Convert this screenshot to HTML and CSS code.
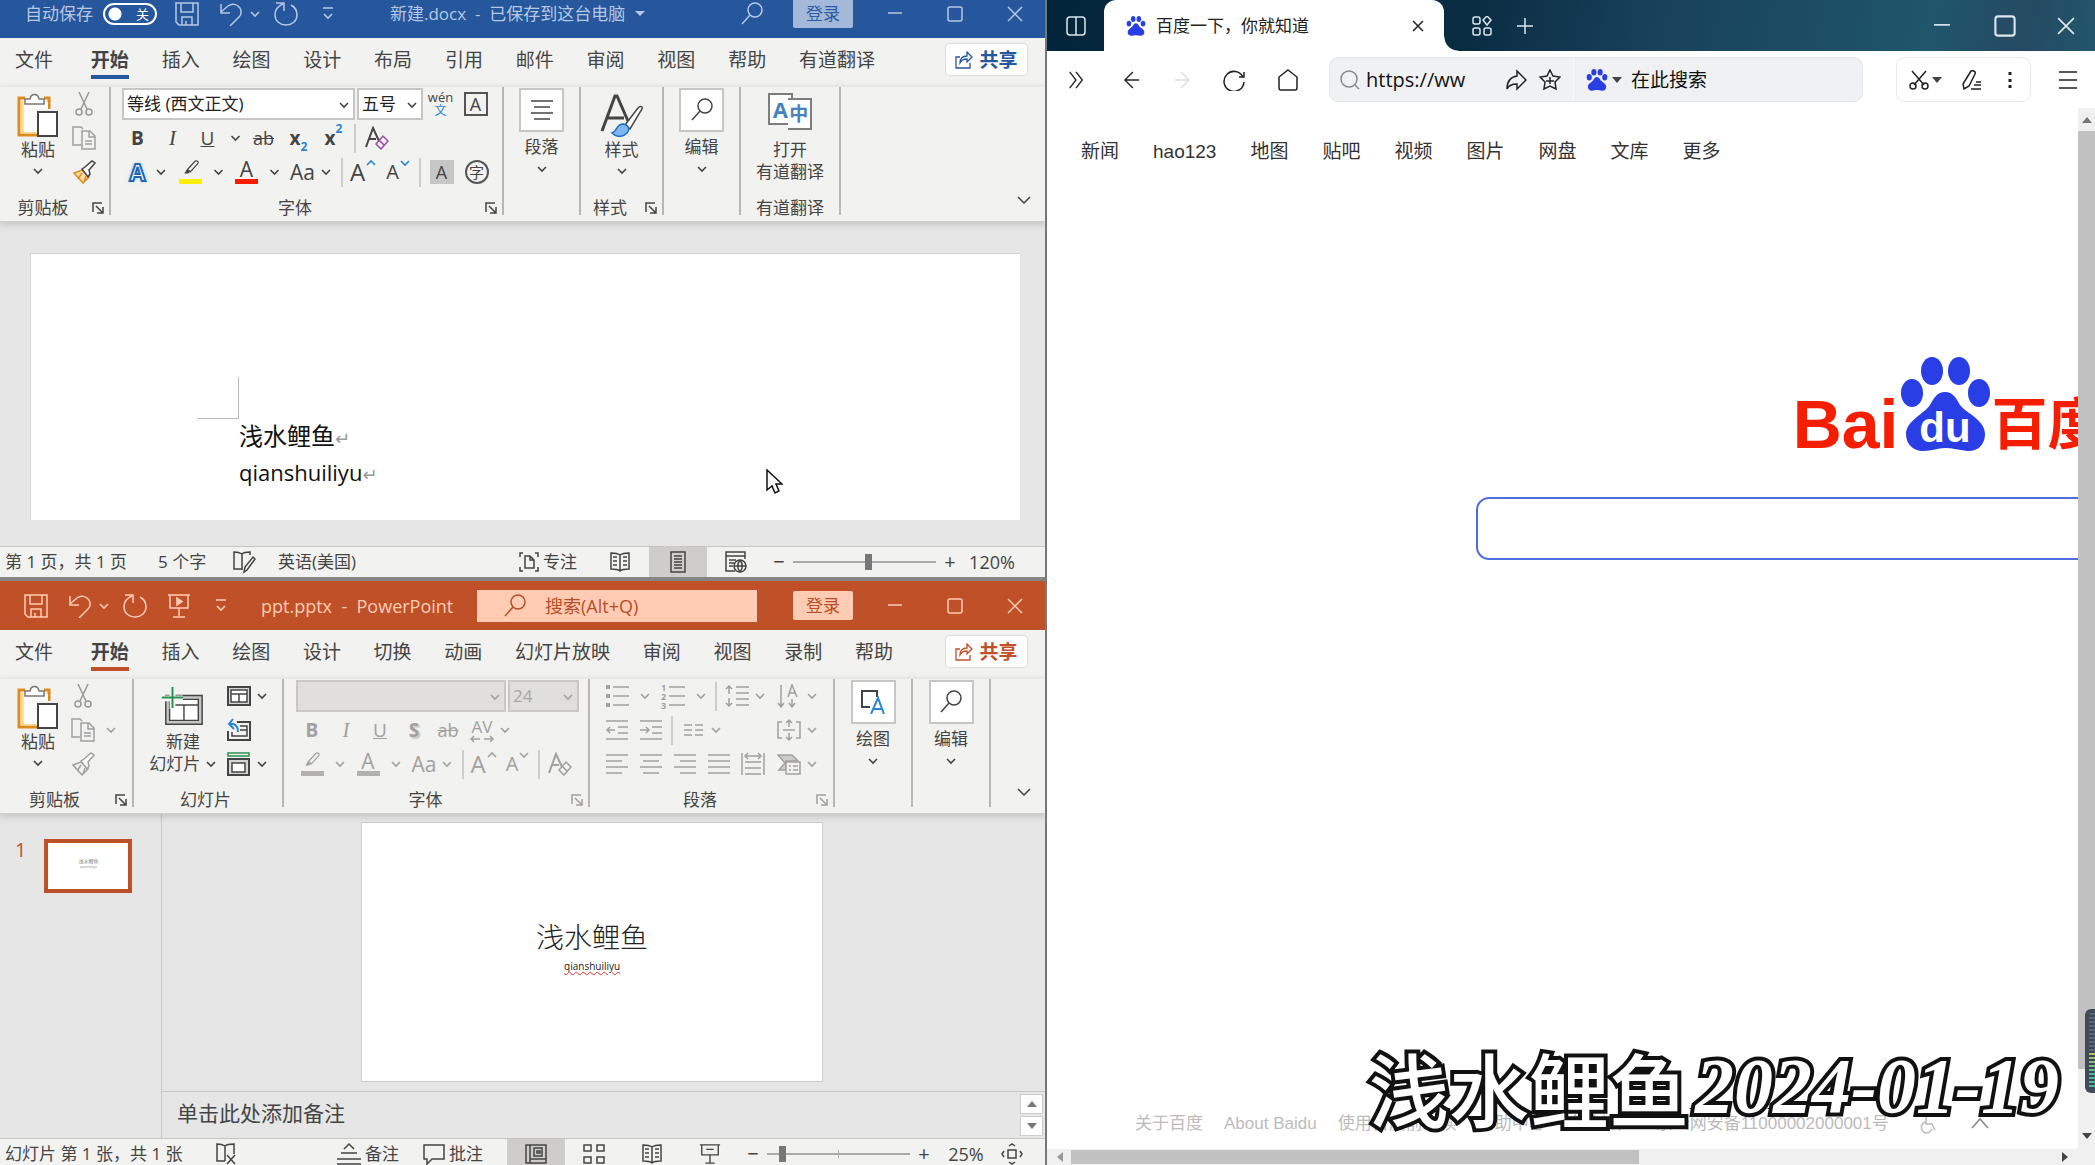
FILE: index.html
```html
<!DOCTYPE html>
<html lang="zh-CN">
<head>
    <meta charset="UTF-8">
    <meta name="viewport" content="width=device-width, initial-scale=1.0">
    <title>百度一下，你就知道</title>
    <link rel="stylesheet" href="styles.css">
</head>
<body>
    <!-- Shared icons -->
    <svg class="sprite" aria-hidden="true">
        <symbol id="chev" viewBox="0 0 12 12"><path d="M2 4l4 4 4-4" stroke-width="1.6"/></symbol>
        <symbol id="save" viewBox="0 0 24 24"><path d="M1 1h22v22H4l-3-3zM6 1v9h12V1M7 23v-8h10v8M11 19v4"/></symbol>
        <symbol id="undo" viewBox="0 0 24 24"><path d="M2 2v9h9M2 10l7-6c4-3 9-2 12 2 2 4 1 7-1 9l-9 9"/></symbol>
        <symbol id="redo" viewBox="0 0 24 24"><path d="M2 1h8v8M9 2C4 4 1 8 1 13c0 6 5 10 11 10s11-4 11-10c0-4-2-8-6-10"/></symbol>
        <symbol id="more" viewBox="0 0 12 16"><path d="M1 2h10M2 8l4 4 4-4" stroke-width="1.6"/></symbol>
        <symbol id="show" viewBox="0 0 24 24"><path d="M1 1h22M3 1v13h18V1M12 14v8M6 23h12"/><path d="M10 4l5 3.500-5 3.500z" fill="currentColor"/></symbol>
        <symbol id="lens" viewBox="0 0 24 24"><circle cx="15" cy="8" r="7"/><path d="M10 13L2 22"/></symbol>
        <symbol id="min" viewBox="0 0 16 16"><path d="M1 7h14"/></symbol>
        <symbol id="max" viewBox="0 0 16 16"><rect x="1" y="1" width="14" height="14" rx="2"/></symbol>
        <symbol id="close" viewBox="0 0 16 16"><path d="M1 1l14 14M15 1L1 15"/></symbol>
        <symbol id="share" viewBox="0 0 18 18"><path d="M5 6H1v11h14v-5M5 12c0-4 2-7 7-7V1l5 5-5 5V8c-4 0-5 1-7 4z" stroke-width="1.3"/></symbol>
        <symbol id="paste" viewBox="0 0 42 44"><path d="M8 5H2v37h18M27 5h5v11" stroke="#e08a1e" stroke-width="3"/><path d="M5 8v31h15" stroke="#ffd98a" stroke-width="3"/><path d="M7 9h24v7H20v23H7z" fill="#fbfbfa" stroke="none"/><path d="M8 11V6h5c1-6 8-6 9 0h5v5z" fill="#fff" stroke="#777"/><path d="M21 19h19v24H21z" fill="#fff" stroke="#444" stroke-width="2"/></symbol>
        <symbol id="cut" viewBox="0 0 24 24"><path d="M7 0l8 17M17 0L9 17" stroke="#999"/><circle cx="7" cy="20" r="3" stroke="#999"/><circle cx="17" cy="20" r="3" stroke="#999"/></symbol>
        <symbol id="copy" viewBox="0 0 24 24"><path d="M9 19H1V1h8l2 2M10 5h8l5 5v13H10zM17 5v6h6M13 15h7M13 18h7" stroke="#a0a0a0"/></symbol>
        <symbol id="brush" viewBox="0 0 24 24"><path class="bristle" d="M2 13l8-3 7 7-6 6zM6 19l4-6M12 22l2-6"/><path d="M10 9l3-2 7-6 3 2-6 7 1 4-2 3z" fill="#fff"/></symbol>
        <symbol id="launch" viewBox="0 0 12 12"><path d="M1 10V1h9M4 4l7 7M11 5v6H5"/></symbol>
        <symbol id="marker" viewBox="0 0 24 24"><path d="M7 13L17 2c2-2 6 0 4 3L11 16z"/><path d="M7 12l-4 6h5l4-3z" fill="currentColor" stroke="none"/></symbol>
        <symbol id="eraser" viewBox="0 0 24 24"><path d="M1 21L8 2l6 13M4 13h7" stroke-width="2"/><path class="rubber" d="M11 18l7-8 5 5-7 8zM14 14l5 5"/></symbol>
        <symbol id="lines" viewBox="0 0 24 24"><path d="M1 3h22M4 9h16M1 15h22M4 21h16"/></symbol>
        <symbol id="book" viewBox="0 0 22 22"><path d="M11 4v16M11 4C8 2 4 2 2 2v16c4 0 7 0 9 2 2-2 5-2 9-2V2c-2 0-6 0-9 2M4 6h4M4 10h4M4 14h4M14 6h4M14 10h4M14 14h4"/></symbol>
        <symbol id="paw" viewBox="0 0 89 95"><g fill="#2a3ee6" stroke="none"><ellipse cx="31" cy="14" rx="11" ry="14"/><ellipse cx="58" cy="14" rx="11" ry="14"/><ellipse cx="11" cy="36" rx="11" ry="14"/><ellipse cx="78" cy="36" rx="11" ry="14"/><path d="M44 35c8 0 11 6 15 13 6 8 25 15 25 29 0 11-8 18-18 17-8-1-14-3-22-3s-12 3-22 3C12 94 5 87 5 77c0-13 18-20 24-29 4-7 7-13 15-13z"/></g></symbol>
    </svg>

    <div class="desktop">
        <div class="office">
            <!-- Word -->
            <section class="window word">
                <header class="titlebar">
                    <label class="autosave">自动保存 <input type="checkbox" class="hidden-check"><span class="toggle">关</span></label>
                    <div class="quick">
                        <button aria-label="保存"><svg class="i24"><use href="#save"/></svg></button>
                        <button aria-label="撤消"><svg class="i24"><use href="#undo"/></svg><svg class="i12"><use href="#chev"/></svg></button>
                        <button aria-label="重做"><svg class="i24"><use href="#redo"/></svg></button>
                        <button aria-label="更多" class="more"><svg class="more-icon"><use href="#more"/></svg></button>
                    </div>
                    <div class="doc-name">新建.docx&nbsp; -&nbsp; 已保存到这台电脑 <i class="caret"></i></div>
                    <button class="find" aria-label="搜索"><svg class="i24"><use href="#lens"/></svg></button>
                    <button class="login">登录</button>
                    <div class="controls">
                        <button aria-label="最小化"><svg class="i16"><use href="#min"/></svg></button>
                        <button aria-label="最大化"><svg class="i16"><use href="#max"/></svg></button>
                        <button aria-label="关闭"><svg class="i16"><use href="#close"/></svg></button>
                    </div>
                </header>
                <div class="tabs">
                    <nav>
                        <a href="#" class="file">文件</a><a href="#" class="active">开始</a><a href="#">插入</a><a href="#">绘图</a><a href="#">设计</a><a href="#">布局</a><a href="#">引用</a><a href="#">邮件</a><a href="#">审阅</a><a href="#">视图</a><a href="#">帮助</a><a href="#">有道翻译</a>
                    </nav>
                    <button class="share"><svg class="i18"><use href="#share"/></svg>共享</button>
                </div>
                <div class="ribbon">
                    <div class="group g-clip">
                        <div class="tools">
                            <button class="big"><svg class="paste"><use href="#paste"/></svg>粘贴<svg class="i12"><use href="#chev"/></svg></button>
                            <div class="rows">
                                <div class="row"><button class="tb" aria-label="剪切"><svg class="i24"><use href="#cut"/></svg></button></div>
                                <div class="row"><button class="tb" aria-label="复制"><svg class="i24"><use href="#copy"/></svg></button></div>
                                <div class="row"><button class="tb orange" aria-label="格式刷"><svg class="i24"><use href="#brush"/></svg></button></div>
                            </div>
                        </div>
                        <div class="caption"><span>剪贴板</span><svg class="i12"><use href="#launch"/></svg></div>
                    </div>
                    <div class="group g-font">
                        <div class="rows">
                            <div class="row">
                                <span class="combo name"><select aria-label="字体"><option>等线 (西文正文)</option></select><svg class="i12"><use href="#chev"/></svg></span>
                                <span class="combo size"><select aria-label="字号"><option>五号</option></select><svg class="i12"><use href="#chev"/></svg></span>
                                <button class="tb pinyin"><span>wén</span><b>文</b></button>
                                <button class="tb"><span class="boxed">A</span></button>
                            </div>
                            <div class="row">
                                <button class="tb bold">B</button>
                                <button class="tb italic">I</button>
                                <button class="tb under">U</button><svg class="chev"><use href="#chev"/></svg>
                                <button class="tb strike">ab</button>
                                <button class="tb bold script">x<sub>2</sub></button>
                                <button class="tb bold script">x<sup>2</sup></button>
                                <i class="sep"></i>
                                <button class="tb" aria-label="清除格式"><svg class="i24"><use href="#eraser"/></svg></button>
                            </div>
                            <div class="row">
                                <button class="tb effect">A</button><svg class="chev tight"><use href="#chev"/></svg>
                                <button class="tb swatch yellow" aria-label="突出显示"><svg class="i18"><use href="#marker"/></svg></button><svg class="chev"><use href="#chev"/></svg>
                                <button class="tb swatch red">A</button><svg class="chev"><use href="#chev"/></svg>
                                <button class="tb case">Aa</button><svg class="chev tight"><use href="#chev"/></svg>
                                <i class="sep"></i>
                                <button class="tb grow">A<svg class="i12 up"><use href="#chev"/></svg></button>
                                <button class="tb shrink">A<svg class="i12"><use href="#chev"/></svg></button>
                                <i class="sep"></i>
                                <button class="tb"><span class="shade">A</span></button>
                                <button class="tb"><span class="ring">字</span></button>
                            </div>
                        </div>
                        <div class="caption"><span>字体</span><svg class="i12"><use href="#launch"/></svg></div>
                    </div>
                    <div class="group g-small">
                        <button class="big framed"><span class="frame"><svg class="i24"><use href="#lines"/></svg></span>段落<svg class="i12"><use href="#chev"/></svg></button>
                    </div>
                    <div class="group g-style">
                        <button class="big"><svg class="style-icon" viewBox="0 0 44 44"><path d="M2 38L15 3h2l11 25M7 25h17" stroke-width="3"/><path d="M25 32l13-17c2-2 5-2 4 1L30 36z" fill="#fff"/><path d="M12 40c5-1 4-9 11-9 6 1 7 5 4 9-5 5-11 4-15 0z" fill="#7fb8f0" stroke="#1c6fc0" stroke-width="1.5"/></svg>样式<svg class="i12"><use href="#chev"/></svg></button>
                        <div class="caption"><span>样式</span><svg class="i12"><use href="#launch"/></svg></div>
                    </div>
                    <div class="group g-small">
                        <button class="big framed"><span class="frame"><svg class="i24"><use href="#lens"/></svg></span>编辑<svg class="i12"><use href="#chev"/></svg></button>
                    </div>
                    <div class="group g-youdao">
                        <button class="big"><span class="translate"><b>A</b><b>中</b></span>打开<span>有道翻译</span></button>
                        <div class="caption"><span>有道翻译</span></div>
                    </div>
                    <button class="collapse" aria-label="折叠功能区"><svg class="i18" viewBox="0 0 12 12"><path d="M2 4l4 4 4-4" stroke-width="1"/></svg></button>
                </div>
                <main class="canvas">
                    <article class="paper">
                        <i class="margin-mark"></i>
                        <p class="cn">浅水鲤鱼<span>↵</span></p>
                        <p>qianshuiliyu<span>↵</span></p>
                    </article>
                </main>
                <footer class="status">
                    <span class="pages">第 1 页，共 1 页</span>
                    <span class="words">5 个字</span>
                    <svg class="i24" viewBox="0 0 24 24"><path d="M10 3v17M10 4C7 2 4 2 2 2v17h8M10 4c2-2 5-2 8-2v3M12 22l1-5 8-10 2 2-8 11z"/></svg>
                    <span>英语(美国)</span>
                    <div class="views">
                        <button class="focus"><svg class="i20" viewBox="0 0 20 20"><path d="M4 1H1v4M16 1h3v4M4 19H1v-4M16 19h3v-4M6 4h5l4 4v8H6zM11 4v4h4"/></svg>专注</button>
                        <button class="view" aria-label="阅读视图"><svg class="i22"><use href="#book"/></svg></button>
                        <button class="view on" aria-label="页面视图"><svg class="i22" viewBox="0 0 22 22"><path d="M4 1h14v20H4zM7 5h8M7 8h8M7 11h8M7 14h8M7 17h8"/></svg></button>
                        <button class="view" aria-label="Web 版式"><svg class="i22" viewBox="0 0 22 22"><path d="M10 20H1V1h19v7M1 5h19M4 9h7M4 12h5M4 15h4"/><circle cx="15" cy="15" r="6"/><path d="M9 15h12M15 9c-3 4-3 8 0 12M15 9c3 4 3 8 0 12"/></svg></button>
                        <button class="zoom">−</button>
                        <input type="range" aria-label="缩放" min="0" max="100" value="53">
                        <button class="zoom">+</button>
                        <span class="percent">120%</span>
                    </div>
                </footer>
            </section>

            <!-- PowerPoint -->
            <section class="window ppt">
                <header class="titlebar">
                    <div class="quick">
                        <button aria-label="保存"><svg class="i24"><use href="#save"/></svg></button>
                        <button aria-label="撤消"><svg class="i24"><use href="#undo"/></svg><svg class="i12"><use href="#chev"/></svg></button>
                        <button aria-label="重做"><svg class="i24"><use href="#redo"/></svg></button>
                        <button aria-label="放映"><svg class="i24"><use href="#show"/></svg></button>
                        <button aria-label="更多" class="more"><svg class="more-icon"><use href="#more"/></svg></button>
                    </div>
                    <div class="doc-name">ppt.pptx&nbsp; -&nbsp; PowerPoint</div>
                    <label class="searchbox"><svg class="i24"><use href="#lens"/></svg><input type="text" placeholder="搜索(Alt+Q)" aria-label="搜索"></label>
                    <button class="login">登录</button>
                    <div class="controls">
                        <button aria-label="最小化"><svg class="i16"><use href="#min"/></svg></button>
                        <button aria-label="最大化"><svg class="i16"><use href="#max"/></svg></button>
                        <button aria-label="关闭"><svg class="i16"><use href="#close"/></svg></button>
                    </div>
                </header>
                <div class="tabs">
                    <nav>
                        <a href="#" class="file">文件</a><a href="#" class="active">开始</a><a href="#">插入</a><a href="#">绘图</a><a href="#">设计</a><a href="#">切换</a><a href="#">动画</a><a href="#">幻灯片放映</a><a href="#">审阅</a><a href="#">视图</a><a href="#">录制</a><a href="#">帮助</a>
                    </nav>
                    <button class="share"><svg class="i18"><use href="#share"/></svg>共享</button>
                </div>
                <div class="ribbon">
                    <div class="group g-clip">
                        <div class="tools">
                            <button class="big"><svg class="paste"><use href="#paste"/></svg>粘贴<svg class="i12"><use href="#chev"/></svg></button>
                            <div class="rows off">
                                <div class="row"><button class="tb" aria-label="剪切"><svg class="i24"><use href="#cut"/></svg></button></div>
                                <div class="row"><button class="tb" aria-label="复制"><svg class="i24"><use href="#copy"/></svg></button><svg class="chev"><use href="#chev"/></svg></div>
                                <div class="row"><button class="tb" aria-label="格式刷"><svg class="i24"><use href="#brush"/></svg></button></div>
                            </div>
                        </div>
                        <div class="caption"><span>剪贴板</span><svg class="i12"><use href="#launch"/></svg></div>
                    </div>
                    <div class="group g-slides">
                        <div class="tools">
                            <button class="big"><svg class="new-slide" viewBox="0 0 46 44"><path d="M5 10h38v30H5z" fill="#c8c6c4"/><path d="M9 14h30v22H9z" fill="#fff" stroke-width="1.5"/><path d="M9 20h30M24 20v16" stroke-width="1.5"/><path d="M12 2v22M1 13h22" stroke="#f2f2f0" stroke-width="6"/><path d="M12 1v22M1 12h22" stroke="#2b9150" stroke-width="2"/></svg>新建<span>幻灯片 <svg class="i12"><use href="#chev"/></svg></span></button>
                            <div class="rows">
                                <div class="row"><button class="tb" aria-label="版式"><svg class="i24" viewBox="0 0 24 24"><path d="M1 3h22v18H1z" fill="#d8d6d4" stroke-width="2"/><path d="M4 6h16v12H4zM4 10h16M12 10v8" fill="#fff"/></svg></button><svg class="chev tight"><use href="#chev"/></svg></div>
                                <div class="row"><button class="tb" aria-label="重置"><svg class="i24" viewBox="0 0 24 24"><path d="M10 4h13v18H1V13" stroke-width="2"/><path d="M13 8h7v10H5v-4M13 12h7"/><path d="M6 1L2 6l5 5M2 6c7-1 9 3 9 8" stroke="#2a86d0" stroke-width="2"/></svg></button></div>
                                <div class="row"><button class="tb" aria-label="节"><svg class="i24" viewBox="0 0 24 24"><path d="M1 1h21v3H1z" stroke="#2b9150"/><path d="M1 7h21v16H1z" fill="#d8d6d4" stroke-width="2"/><path d="M5 11h13v9H5z" fill="#fff"/></svg></button><svg class="chev tight"><use href="#chev"/></svg></div>
                            </div>
                        </div>
                        <div class="caption"><span>幻灯片</span></div>
                    </div>
                    <div class="group g-font off">
                        <div class="rows">
                            <div class="row">
                                <span class="combo name"><select aria-label="字体" disabled><option></option></select><svg class="i12"><use href="#chev"/></svg></span>
                                <span class="combo size"><select aria-label="字号" disabled><option>24</option></select><svg class="i12"><use href="#chev"/></svg></span>
                            </div>
                            <div class="row">
                                <button class="tb bold">B</button>
                                <button class="tb italic">I</button>
                                <button class="tb under">U</button>
                                <button class="tb bold shadow">S</button>
                                <button class="tb strike">ab</button>
                                <button class="tb spacing">AV<svg viewBox="0 0 24 8"><path d="M4 1L1 4l3 3M1 4h9M20 1l3 3-3 3M23 4h-9"/></svg></button><svg class="chev tight"><use href="#chev"/></svg>
                            </div>
                            <div class="row">
                                <button class="tb swatch" aria-label="突出显示"><svg class="i18"><use href="#marker"/></svg></button><svg class="chev"><use href="#chev"/></svg>
                                <button class="tb swatch">A</button><svg class="chev"><use href="#chev"/></svg>
                                <button class="tb case">Aa</button><svg class="chev tight"><use href="#chev"/></svg>
                                <i class="sep"></i>
                                <button class="tb grow">A<svg class="i12 up"><use href="#chev"/></svg></button>
                                <button class="tb shrink">A<svg class="i12"><use href="#chev"/></svg></button>
                                <i class="sep"></i>
                                <button class="tb" aria-label="清除格式"><svg class="i24"><use href="#eraser"/></svg></button>
                            </div>
                        </div>
                        <div class="caption"><span>字体</span><svg class="i12"><use href="#launch"/></svg></div>
                    </div>
                    <div class="group g-para off">
                        <div class="rows">
                            <div class="row">
                                <button class="tb" aria-label="项目符号"><svg class="i24" viewBox="0 0 24 24"><path d="M8 3h16M8 12h16M8 21h16"/><path d="M1 3h4M1 12h4M1 21h4" stroke-width="4"/></svg></button><svg class="chev"><use href="#chev"/></svg>
                                <button class="tb numbered" aria-label="编号"><span>1<br>2<br>3</span><svg viewBox="0 0 16 24"><path d="M0 3h16M0 12h16M0 21h16"/></svg></button><svg class="chev"><use href="#chev"/></svg>
                                <i class="sep"></i>
                                <button class="tb" aria-label="行距"><svg class="i24" viewBox="0 0 24 24"><path d="M11 3h13M11 9h13M11 15h13M11 21h13M4 10V2M1 5l3-3 3 3M4 14v8M1 19l3 3 3-3"/></svg></button><svg class="chev tight"><use href="#chev"/></svg>
                                <button class="tb last" aria-label="文字方向"><svg class="i24" viewBox="0 0 24 24"><path d="M4 1v22M1 19l3 4 3-4M15 15v8M12 19l3 4 3-4M11 13l4-12 5 12M12 9h6"/></svg></button><svg class="chev tight"><use href="#chev"/></svg>
                            </div>
                            <div class="row">
                                <button class="tb" aria-label="减少缩进"><svg class="i24" viewBox="0 0 24 24"><path d="M1 3h22M13 9h10M13 15h10M1 21h22M10 12H2M5 9l-3 3 3 3"/></svg></button>
                                <button class="tb" aria-label="增加缩进"><svg class="i24" viewBox="0 0 24 24"><path d="M1 3h22M13 9h10M13 15h10M1 21h22M1 12h9M7 9l3 3-3 3"/></svg></button>
                                <i class="sep"></i>
                                <button class="tb" aria-label="分栏"><svg class="i20" viewBox="0 0 20 20"><path d="M1 5h8M1 10h8M1 15h8M12 5h8M12 10h8M12 15h8"/></svg></button><svg class="chev tight"><use href="#chev"/></svg>
                                <button class="tb last" aria-label="对齐文本"><svg class="i24" viewBox="0 0 24 24"><path d="M5 4H1v16h4M19 4h4v16h-4M6 12h12M12 9V2M9 5l3-3 3 3M12 15v7M9 19l3 3 3-3"/></svg></button><svg class="chev tight"><use href="#chev"/></svg>
                            </div>
                            <div class="row">
                                <button class="tb" aria-label="左对齐"><svg class="i24" viewBox="0 0 24 24"><path d="M1 3h22M1 9h16M1 15h22M1 21h16"/></svg></button>
                                <button class="tb" aria-label="居中"><svg class="i24"><use href="#lines"/></svg></button>
                                <button class="tb" aria-label="右对齐"><svg class="i24" viewBox="0 0 24 24"><path d="M1 3h22M7 9h16M1 15h22M7 21h16"/></svg></button>
                                <button class="tb" aria-label="两端对齐"><svg class="i24" viewBox="0 0 24 24"><path d="M1 3h22M1 9h22M1 15h22M1 21h22"/></svg></button>
                                <button class="tb" aria-label="分散对齐"><svg class="i24" viewBox="0 0 24 24"><path d="M1 1v22M23 1v22M4 10h16M4 16h16M4 22h16M4 4h16M7 1L4 4l3 3M17 1l3 3-3 3"/></svg></button>
                                <button class="tb last" aria-label="SmartArt"><svg class="i24" viewBox="0 0 24 24"><path d="M1 3h14l6 6H9v9H2l6-7z" fill="#ccc"/><path d="M9 10h14v12H9zM12 14h2M16 14h5M12 18h2M16 18h5" fill="#f2f2f0"/></svg></button><svg class="chev tight"><use href="#chev"/></svg>
                            </div>
                        </div>
                        <div class="caption"><span>段落</span><svg class="i12"><use href="#launch"/></svg></div>
                    </div>
                    <div class="group g-small">
                        <button class="big framed"><span class="frame"><svg class="i24" viewBox="0 0 24 24"><path d="M9 17H1V1h15v6" stroke-width="2"/><path d="M10 24l7-16 6 16M12 19h9" stroke="#2a86d0" stroke-width="2"/></svg></span>绘图<svg class="i12"><use href="#chev"/></svg></button>
                    </div>
                    <div class="group g-small">
                        <button class="big framed"><span class="frame"><svg class="i24"><use href="#lens"/></svg></span>编辑<svg class="i12"><use href="#chev"/></svg></button>
                    </div>
                    <button class="collapse" aria-label="折叠功能区"><svg class="i18" viewBox="0 0 12 12"><path d="M2 4l4 4 4-4" stroke-width="1"/></svg></button>
                </div>
                <main class="deck">
                    <aside class="thumbs">
                        <span>1</span>
                        <div class="thumb"><p>浅水鲤鱼</p><p class="sub">qianshuiliyu</p></div>
                    </aside>
                    <div class="stage">
                        <div class="slide-area">
                            <article class="slide"><h2>浅水鲤鱼</h2><p>qianshuiliyu</p></article>
                        </div>
                        <div class="notes">
                            <span>单击此处添加备注</span>
                            <div class="note-scroll"><button aria-label="向上"><i class="tri up"></i></button><button aria-label="向下"><i class="tri"></i></button></div>
                        </div>
                    </div>
                </main>
                <footer class="status">
                    <span class="pages">幻灯片 第 1 张，共 1 张</span>
                    <svg class="i24" viewBox="0 0 24 24"><path d="M11 3v16M11 4C8 2 5 2 3 2v17h8M11 4c2-2 5-2 9-2v10M13 13l8 9M21 13l-8 9"/></svg>
                    <div class="views">
                        <button class="remarks"><svg class="i24" viewBox="0 0 24 24"><path d="M7 7l5-5 5 5M4 11h16M0 17h24M0 22h24"/></svg>备注</button>
                        <button class="remarks"><svg class="i22" viewBox="0 0 22 22"><path d="M1 2h20v14H9l-5 5v-5H1z"/></svg>批注</button>
                        <button class="view on" aria-label="普通视图"><svg class="i22" viewBox="0 0 22 22"><path d="M1 2h20v18H1zM5 2v18M5 16h16M9 5h8v8H9zM12 8h3v2h-3z"/></svg></button>
                        <button class="view" aria-label="浏览"><svg class="i22" viewBox="0 0 22 22"><path d="M1 2h7v6H1zM14 2h7v6h-7zM1 14h7v6H1zM14 14h7v6h-7z"/></svg></button>
                        <button class="view" aria-label="阅读视图"><svg class="i22"><use href="#book"/></svg></button>
                        <button class="view" aria-label="放映"><svg class="i22" viewBox="0 0 24 24"><path d="M1 2h22M3 2v11h18V2M8 7h8M12 13v9M7 22h10"/></svg></button>
                        <button class="zoom">−</button>
                        <input type="range" class="ticked" aria-label="缩放" min="0" max="100" value="9">
                        <button class="zoom">+</button>
                        <span class="percent">25%</span>
                        <button class="fit" aria-label="适应窗口"><svg class="i22" viewBox="0 0 22 22"><path d="M7 7h8v8H7zM8 3l3-2 3 2M8 19l3 2 3-2M3 8l-2 3 2 3M19 8l2 3-2 3"/></svg></button>
                    </div>
                </footer>
            </section>
        </div>

        <!-- Browser -->
        <section class="browser">
            <header class="strip">
                <button class="side" aria-label="侧栏"><svg class="i20" viewBox="0 0 20 20"><path d="M10 1v18M10 1H4C2 1 1 2 1 4v12c0 2 1 3 3 3h12c2 0 3-1 3-3V4c0-2-1-3-3-3h-6"/></svg></button>
                <div class="tab"><svg class="i20"><use href="#paw"/></svg><span>百度一下，你就知道</span><button aria-label="关闭标签页"><svg class="i12" viewBox="0 0 12 12"><path d="M1 1l10 10M11 1L1 11"/></svg></button></div>
                <button class="apps" aria-label="应用"><svg class="i20" viewBox="0 0 20 20"><rect x="1" y="1" width="7" height="7" rx="2"/><path d="M15 0l4 4-4 5-4-5z"/><rect x="1" y="12" width="7" height="7" rx="2"/><rect x="12" y="12" width="7" height="7" rx="2"/></svg></button>
                <button class="add" aria-label="新建标签页"><svg class="i16" viewBox="0 0 16 16"><path d="M8 0v16M0 8h16"/></svg></button>
                <div class="win">
                    <button aria-label="最小化"><svg class="i18"><use href="#min"/></svg></button>
                    <button aria-label="最大化"><svg class="i22"><use href="#max"/></svg></button>
                    <button aria-label="关闭"><svg class="i18"><use href="#close"/></svg></button>
                </div>
            </header>
            <div class="toolbar">
                <div class="moves">
                    <button class="expand" aria-label="展开"><svg class="i18" viewBox="0 0 20 20"><path d="M3 1l7 9-7 9M10 1l7 9-7 9"/></svg></button>
                    <button aria-label="后退"><svg class="i18" viewBox="0 0 20 20"><path d="M11 1l-9 9 9 9M2 10h16"/></svg></button>
                    <button class="faint" aria-label="前进"><svg class="i18" viewBox="0 0 20 20"><path d="M9 1l9 9-9 9M18 10H2"/></svg></button>
                    <button aria-label="刷新"><svg class="i22" viewBox="0 0 22 22"><path d="M20 8a10 10 0 1 0 1 5M16 8h5V3"/></svg></button>
                    <button aria-label="主页"><svg class="i22" viewBox="0 0 22 22"><path d="M11 1l9 7v11c0 1-1 2-2 2H4c-1 0-2-1-2-2V8z"/></svg></button>
                </div>
                <div class="address">
                    <svg class="i20 grey" viewBox="0 0 20 20"><circle cx="9" cy="9" r="8"/><path d="M15 15l4 4"/></svg>
                    <input class="url" type="text" aria-label="地址" value="https://ww">
                    <svg class="i22" viewBox="0 0 22 22"><path d="M12 2l9 9-9 9v-5c-5 0-8 1-10 5 0-8 3-12 10-13z"/></svg>
                    <svg class="i22" viewBox="0 0 22 22"><path d="M11 1l3 6 7 1-5 5 1 7-6-3-6 3 1-7-5-5 7-1zM11 8v7M7 12h8"/></svg>
                    <i class="rule"></i>
                    <svg class="i22"><use href="#paw"/></svg><i class="tri dark"></i>
                    <input class="query" type="text" aria-label="搜索" placeholder="在此搜索">
                </div>
                <div class="extras">
                    <button aria-label="截图"><svg class="i20" viewBox="0 0 20 20"><path d="M3 1l12 14M17 1L5 15"/><circle cx="4" cy="16" r="3"/><circle cx="16" cy="16" r="3"/></svg><i class="tri dark"></i></button>
                    <button aria-label="标注"><svg class="i20" viewBox="0 0 20 20"><path d="M9 1c3-1 5 1 4 3L7 16l-5 3-1-5zM14 12h5M12 15h7M9 19h10"/></svg></button>
                    <button aria-label="更多"><svg class="i16" viewBox="0 0 16 16"><path d="M8 0v3M8 7v3M8 13v3" stroke-width="3"/></svg></button>
                </div>
                <button class="menu" aria-label="菜单"><svg class="i18" viewBox="0 0 18 18"><path d="M0 1h18M0 9h18M0 17h18"/></svg></button>
            </div>
            <div class="viewport">
                <div class="page">
                    <nav class="links">
                        <a href="#">新闻</a><a href="#">hao123</a><a href="#">地图</a><a href="#">贴吧</a><a href="#">视频</a><a href="#">图片</a><a href="#">网盘</a><a href="#">文库</a><a href="#">更多</a>
                    </nav>
                    <div class="logo">
                        <span class="bai">Bai</span>
                        <svg viewBox="0 0 89 95"><use href="#paw"/><text x="44" y="85" text-anchor="middle">du</text></svg>
                        <span class="hanzi">百度</span>
                    </div>
                    <input class="main-search" type="text" aria-label="百度搜索">
                    <footer class="foot">
                        <a href="#">关于百度</a><a href="#">About Baidu</a><a href="#">使用百度前必读</a><a href="#">帮助中心</a><a href="#">企业推广</a><a href="#">京公网安备11000002000001号</a>
                        <svg class="i20" viewBox="0 0 20 20"><path d="M8 3v7h6l3 6M7 8c-6 3-4 11 2 11 3 0 4-2 5-4M8 1h1"/></svg>
                        <svg class="i18 top" viewBox="0 0 18 18"><path d="M1 13l8-9 8 9"/></svg>
                    </footer>
                </div>
                <div class="vbar"><i class="tri up"></i><div class="vthumb"></div><i class="tri dark"></i></div>
                <div class="hbar"><i class="tri left"></i><div class="hthumb"></div><i class="tri right"></i></div>
            </div>
        </section>
    </div>

    <div class="watermark"><span>浅水鲤鱼</span>2024-01-19</div>
    <div class="meter"></div>
    <svg class="pointer" viewBox="0 0 18 26"><path d="M2 1v20l5-4 3 7 4-2-3-7h6z" fill="#fff" stroke="#111"/></svg>
</body>
</html>
```
FILE: styles.css
```css
* {
    margin: 0;
    padding: 0;
    box-sizing: border-box;
}

body {
    height: 100vh;
    overflow: hidden;
    font-family: "Open Sans", "Noto Sans CJK SC", sans-serif;
    font-size: 17px;
    line-height: 22px;
    color: #444;
    background: #fff;
}

button, input, select {
    font: inherit;
    color: inherit;
    background: none;
    border: none;
    outline: none;
}

button {
    display: flex;
    align-items: center;
    justify-content: center;
}

a {
    color: inherit;
    text-decoration: none;
}

svg {
    flex: none;
    fill: none;
    stroke: currentColor;
    stroke-width: 1.5;
}

.sprite {
    position: absolute;
    width: 0;
    height: 0;
}

.i12 { width: 12px; height: 12px; }
.i16 { width: 16px; height: 16px; }
.i18 { width: 18px; height: 18px; }
.i20 { width: 20px; height: 20px; }
.i22 { width: 22px; height: 22px; }
.i24 { width: 24px; height: 24px; }

.desktop {
    display: grid;
    grid-template-columns: 1045fr 1050fr;
    height: 100%;
}

.office {
    display: grid;
    grid-template-rows: 581fr 584fr;
    min-width: 0;
    min-height: 0;
    overflow: hidden;
}

.window {
    display: flex;
    flex-direction: column;
    min-height: 0;
    overflow: hidden;
    background: #f2f2f0;
}

.word {
    --accent: #26569c;
    --slot: 35px;
    border-bottom: 4px solid #858585;
}

.ppt {
    --accent: #c05028;
    --slot: 34px;
}

/* title bars */
.titlebar {
    display: flex;
    align-items: center;
    flex: none;
    height: 49px;
    background: var(--accent);
    color: #b5c8e4;
}

.word .titlebar {
    margin-top: -11px;
    padding-left: 25px;
}

.ppt .titlebar {
    padding-left: 24px;
    color: #ffcbb3;
}

.autosave {
    display: flex;
    align-items: center;
    gap: 10px;
    margin-right: 18px;
}

.hidden-check {
    position: absolute;
    opacity: 0;
}

.toggle {
    width: 54px;
    height: 22px;
    border: 2px solid #fff;
    border-radius: 11px;
    padding-right: 6px;
    font-size: 13px;
    line-height: 18px;
    text-align: right;
    color: #fff;
    background: radial-gradient(circle at 10px 9px, #fff 6px, transparent 7px);
}

.quick {
    display: flex;
    gap: 20px;
}

.quick button:nth-child(2) {
    gap: 6px;
    margin-right: -7px;
}

.more-icon {
    width: 12px;
    height: 16px;
    margin-left: 4px;
}

.doc-name {
    display: flex;
    align-items: center;
    gap: 10px;
    margin: 0 auto 0 34px;
    white-space: nowrap;
}

.ppt .doc-name {
    font-size: 18px;
}

.word .doc-name {
    margin-left: 56px;
}

.caret {
    border: 5px solid transparent;
    border-top-color: currentColor;
    border-bottom: none;
}

.find {
    margin-right: 29px;
}

.searchbox {
    display: flex;
    align-items: center;
    width: 280px;
    height: 32px;
    margin-right: 36px;
    padding-left: 26px;
    gap: 18px;
    background: #ffcbb3;
    color: #b84e28;
    font-size: 18px;
}

.searchbox input {
    min-width: 0;
    flex: 1;
}

.searchbox input::placeholder {
    color: #b84e28;
    opacity: 1;
}

.login {
    width: 60px;
    height: 29px;
    margin-right: 12px;
    border-radius: 2px;
    background: #a4b9d9;
    color: #2b5ca4;
}

.ppt .login {
    background: #ffcbb3;
    color: #b84e28;
}

.controls {
    display: flex;
}

.controls button {
    width: 60px;
}

/* ribbon tabs */
.tabs {
    display: flex;
    align-items: flex-start;
    flex: none;
    height: 49px;
    padding: 5px 17px 0 15px;
    font-size: 19px;
}

.tabs nav {
    display: flex;
    flex: 1;
    justify-content: space-between;
    margin-right: 70px;
    white-space: nowrap;
}

.ppt .tabs nav {
    margin-right: 52px;
}

.tabs a {
    height: 36px;
    padding-top: 6px;
    border-bottom: 4px solid transparent;
}

.tabs .file {
    margin-right: 5px;
}

.tabs .active {
    font-weight: bold;
    border-color: var(--accent);
}

.share {
    width: 83px;
    height: 33px;
    gap: 6px;
    background: #fff;
    border: 1px solid #ddd;
    border-radius: 4px;
    color: var(--accent);
    font-weight: bold;
}

/* ribbon */
.ribbon {
    display: flex;
    flex: none;
    height: 135px;
    padding-bottom: 6px;
    border-bottom: 1px solid #d0cfce;
    position: relative;
    z-index: 1;
    box-shadow: 0 2px 8px rgba(0, 0, 0, 0.18);
}

.group {
    display: flex;
    flex-direction: column;
    flex: none;
    border-right: 2px solid #b9b6b4;
}

.word .g-clip { width: 111px; }
.word .g-font { width: 393px; padding-left: 9px; }
.g-small { width: 77px; }
.g-style { width: 83px; }
.g-youdao { width: 100px; }
.ppt .g-clip { width: 134px; }
.ppt .g-slides { width: 150px; }
.ppt .g-font { width: 306px; padding-left: 11px; }
.ppt .g-para { width: 245px; padding-left: 10px; }
.ppt .g-small { width: 78px; }

.tools {
    display: flex;
    padding-left: 10px;
}

.g-clip .big {
    width: 56px;
}

.g-slides .big {
    width: 78px;
}

.big {
    flex: none;
    flex-direction: column;
    justify-content: flex-start;
    white-space: nowrap;
    align-self: stretch;
    padding-top: 6px;
}

.big > .i12 {
    margin-top: 4px;
}

.paste, .style-icon, .new-slide {
    width: 44px;
    height: 44px;
    margin-bottom: 2px;
}

.framed {
    padding-top: 1px;
}

.frame {
    display: flex;
    align-items: center;
    justify-content: center;
    width: 45px;
    height: 44px;
    margin-bottom: 4px;
    border: 2px solid #c8c6c4;
    background: #fff;
}

.framed > .i12 {
    margin-top: 5px;
}

.translate {
    display: flex;
    width: 44px;
    height: 40px;
    margin-bottom: 6px;
    align-items: flex-start;
}

.translate b {
    width: 26px;
    height: 32px;
    border: 2px solid #7d7d7d;
    background: #fff;
    color: #4682bd;
    font-size: 22px;
    line-height: 28px;
}

.translate b + b {
    margin: 5px 0 0 -5px;
    border-left: none;
    font-size: 19px;
}

.row {
    display: flex;
    align-items: center;
    height: 34px;
}

.caption {
    display: flex;
    align-items: center;
    height: 18px;
    margin-top: auto;
    padding: 4px 5px 0 0;
    line-height: 16px;
}

.caption span {
    flex: 1;
    text-align: center;
    padding-right: 6px;
}

.g-youdao .caption {
    padding-right: 0;
}

.g-youdao span, .g-slides span {
    padding-right: 0;
}

.g-font .caption {
    margin-left: -9px;
}

.g-para .caption {
    margin-left: -10px;
}

.tb {
    flex: none;
    width: var(--slot);
    height: 30px;
    font-size: 21px;
    white-space: nowrap;
}

.chev {
    width: 22px;
    height: 12px;
}

.chev.tight {
    width: 12px;
    margin-right: 6px;
}

.word .chev:not(.tight) {
    width: 21px;
}

.sep {
    width: 2px;
    height: 29px;
    margin: 0 3px;
    background: #cfcdcb;
}

.combo {
    position: relative;
    margin-left: 2px;
}

.combo select {
    display: block;
    appearance: none;
    width: 100%;
    height: 32px;
    padding-left: 3px;
    border: 2px solid #c8c6c4;
    background: #fff;
    color: #222;
}

.combo svg {
    position: absolute;
    right: 5px;
    top: 11px;
}

.word .name { width: 233px; }
.word .size { width: 66px; }
.ppt .name { width: 210px; margin-left: 1px; }
.ppt .size { width: 71px; }

.bold { font-weight: bold; font-size: 19px; }
.italic { font-family: "Liberation Serif", serif; font-style: italic; }
.under { font-size: 19px; text-decoration: underline; }
.strike { font-size: 18px; text-decoration: line-through; }
.case { font-size: 21px; }
.shadow { text-shadow: 2px 2px 1px #ccc; }

.script sub, .script sup {
    font-size: 12px;
    color: #2a86d0;
    align-self: flex-end;
    line-height: 12px;
}

.script sup {
    align-self: flex-start;
}

.pinyin {
    flex-direction: column;
    font-size: 13px;
    line-height: 13px;
}

.pinyin b {
    font-weight: normal;
    color: #2a86d0;
    font-size: 12px;
}

.boxed, .shade, .ring {
    width: 24px;
    height: 24px;
    border: 2px solid #555;
    font-size: 18px;
    line-height: 20px;
    text-align: center;
}

.shade {
    background: #c6c6c6;
    border-color: #c6c6c6;
}

.ring {
    border-radius: 50%;
    font-size: 15px;
}

.effect {
    font-weight: bold;
    font-size: 23px;
    color: #fff;
    -webkit-text-stroke: 2px #1b67b3;
    text-shadow: 0 0 4px #79b9f2;
}

.swatch {
    flex-direction: column;
    line-height: 18px;
}

.swatch::after {
    content: "";
    width: 23px;
    height: 5px;
    margin-top: 1px;
    background: #b3b1af;
}

.yellow::after { background: #fff000; }
.red::after { background: #fb1c00; }

.grow { font-size: 24px; }
.shrink { font-size: 20px; }

.grow svg, .shrink svg {
    align-self: flex-start;
    color: #2a86d0;
}

.up { transform: rotate(180deg); }

.bristle {
    fill: var(--bristle, none);
    stroke: var(--bristle-line, currentColor);
}

.orange {
    --bristle: #ffe0a0;
    --bristle-line: #e08a1e;
}

.rubber {
    stroke: var(--rubber, #9b4aa5);
}

.off {
    --rubber: #a3a19f;
    color: #a3a19f;
}

.off .grow svg, .off .shrink svg {
    color: #a3a19f;
}

.off .combo select {
    background: #e0dfdd;
    border-color: #cac8c6;
    color: #a9a7a5;
    opacity: 1;
}

.off .caption span {
    color: #444;
}

.spacing {
    flex-direction: column;
    font-size: 17px;
    line-height: 17px;
}

.spacing svg {
    width: 24px;
    height: 8px;
}

.numbered {
    gap: 3px;
}

.numbered span {
    font-size: 9px;
    line-height: 9px;
    font-weight: bold;
}

.numbered svg {
    width: 16px;
    height: 24px;
}

.last {
    margin-left: auto;
}

.g-para .row {
    width: 224px;
}

.collapse {
    align-self: flex-end;
    margin: 0 12px 6px auto;
}

/* Word document */
.canvas {
    flex: 1;
    min-height: 0;
    padding: 31px 25px 26px 30px;
    background: #e6e6e6;
}

.paper {
    height: 100%;
    padding: 123px 0 0 167px;
    border-top: 1px solid #d4d4d4;
    border-left: 1px solid #d4d4d4;
    background: #fff;
    font-size: 22px;
    color: #111;
}

.margin-mark {
    display: block;
    width: 41px;
    height: 42px;
    border-right: 1px solid #bbb;
    border-bottom: 1px solid #bbb;
}

.paper p {
    height: 36px;
    padding-left: 41px;
    line-height: 34px;
}

.paper .cn {
    font-size: 24px;
}

.paper span {
    font-family: "DejaVu Sans", sans-serif;
    font-size: 18px;
    line-height: 18px;
    color: #999;
}

/* status bars */
.status {
    display: flex;
    align-items: center;
    flex: none;
    height: 31px;
    padding-left: 5px;
    gap: 22px;
    border-top: 1px solid #c6c6c6;
    background: #f2f2f0;
    white-space: nowrap;
}

.word .pages {
    min-width: 131px;
}

.words {
    min-width: 52px;
}

.ppt .pages {
    min-width: 187px;
}

.ppt .status {
    height: 27px;
    padding-top: 3px;
}

.views {
    display: flex;
    align-items: center;
    align-self: stretch;
    margin-left: auto;
    padding-right: 25px;
}

.ppt .views {
    padding-right: 22px;
}

.focus {
    gap: 4px;
    margin-right: 14px;
}

.remarks {
    gap: 4px;
    margin-right: 24px;
}

.view {
    align-self: stretch;
    width: 58px;
}

.view.on {
    background: #cfcdcb;
}

.ppt .view.on {
    margin-top: -3px;
    padding-top: 3px;
}

.zoom {
    width: 28px;
    font-size: 20px;
}

.views input {
    appearance: none;
    width: 143px;
    height: 16px;
    background: linear-gradient(#aaa, #aaa) center / 100% 2px no-repeat;
}

.views .ticked {
    background: linear-gradient(#aaa, #aaa) center / 100% 2px no-repeat, linear-gradient(#aaa, #aaa) center / 1px 8px no-repeat;
}

.views input::-webkit-slider-thumb {
    appearance: none;
    width: 7px;
    height: 16px;
    background: #777;
}

.percent {
    min-width: 56px;
    font-size: 18px;
    text-align: center;
}

.ppt .fit {
    margin-left: 7px;
}

/* PowerPoint slides */
.deck {
    display: flex;
    flex: 1;
    min-height: 0;
    background: #e6e6e6;
}

.thumbs {
    display: flex;
    gap: 18px;
    width: 162px;
    padding: 25px 0 0 15px;
    border-right: 1px solid #c8c8c8;
    font-size: 20px;
    color: #c9502a;
}

.thumb {
    width: 88px;
    height: 54px;
    padding-top: 15px;
    border: 4px solid #bb5029;
    background: #fff;
    font-size: 5px;
    line-height: 7px;
    text-align: center;
    color: #888;
}

.thumb .sub {
    font-size: 3px;
    line-height: 4px;
}

.stage {
    display: flex;
    flex-direction: column;
    flex: 1;
}

.slide-area {
    flex: 1;
    min-height: 0;
    padding: 8px 0 9px;
}

.slide {
    height: 100%;
    aspect-ratio: 16 / 9;
    margin: 0 auto 0 199px;
    padding-top: 93px;
    border: 1px solid #ccc;
    background: #fff;
    text-align: center;
    color: #222;
}

.slide h2 {
    font-size: 28px;
    font-weight: 300;
    line-height: 42px;
}

.slide p {
    font-size: 10px;
    line-height: 16px;
    text-decoration: underline wavy #d33 1px;
}

.notes {
    display: flex;
    align-items: center;
    height: 47px;
    padding: 2px 2px 2px 15px;
    border-top: 1px solid #c8c8c8;
    font-size: 21px;
}

.notes > span {
    padding-bottom: 4px;
}

.note-scroll {
    display: flex;
    flex-direction: column;
    gap: 2px;
    margin-left: auto;
}

.note-scroll button {
    width: 23px;
    height: 20px;
    border: 1px solid #ccc;
    background: #fff;
}

.tri {
    flex: none;
    width: 0;
    height: 0;
    border: 5px solid transparent;
    border-top: 6px solid #777;
    border-bottom: none;
}

.tri.dark { border-top-color: #444; }
.tri.left { transform: rotate(90deg); border-top-color: #999; }
.tri.right { transform: rotate(-90deg); border-top-color: #444; }

/* browser */
.browser {
    display: flex;
    flex-direction: column;
    min-width: 0;
    min-height: 0;
    border-left: 2px solid #777;
    background: #fff;
    color: #222;
}

.strip {
    display: flex;
    align-items: center;
    flex: none;
    height: 51px;
    color: #dce8ee;
    background: linear-gradient(100deg, #02253a 0%, #092c42 40%, #18405a 57%, #1f566c 84%, #254a62 93%, #22566c 100%);
}

.side {
    width: 57px;
}

.tab {
    display: flex;
    align-items: center;
    align-self: stretch;
    position: relative;
    width: 340px;
    padding: 0 20px 0 22px;
    gap: 10px;
    border-radius: 12px 12px 0 0;
    background: #fff;
    color: #222;
}

/* outward curve where the tab meets the toolbar */
.tab::after {
    content: "";
    position: absolute;
    left: 100%;
    bottom: 0;
    width: 14px;
    height: 14px;
    background: radial-gradient(circle at 100% 0, transparent 13px, #fff 14px);
}

.tab button {
    margin-left: auto;
}

.apps {
    margin-left: 28px;
}

.add {
    margin-left: 25px;
}

.win {
    display: flex;
    margin-left: auto;
}

.win button {
    width: 63px;
}

.win button:last-child {
    width: 59px;
}

.toolbar {
    display: flex;
    align-items: center;
    flex: none;
    height: 57px;
    padding: 0 18px 0 20px;
}

.moves {
    display: flex;
    gap: 32px;
    margin-right: 30px;
}

.expand {
    margin-right: 6px;
}

.faint {
    color: #ddd;
}

.address {
    display: flex;
    align-items: center;
    flex: 1;
    min-width: 0;
    height: 45px;
    padding: 0 10px;
    gap: 12px;
    border: 1px solid #e3e6e9;
    border-radius: 9px;
    background: #eff1f3;
}

.grey {
    color: #888;
    margin-right: -6px;
}

.url {
    width: 127px;
    font-size: 20px;
    color: #111;
}

.rule {
    width: 1px;
    height: 100%;
    background: #fafafa;
}

.address .tri {
    margin: 0 -3px 0 -8px;
}

.query {
    flex: 1;
    min-width: 0;
    font-size: 19px;
}

.query::placeholder {
    color: #111;
    opacity: 1;
}

.extras {
    display: flex;
    align-items: center;
    justify-content: space-between;
    width: 135px;
    height: 45px;
    margin: 0 28px 0 33px;
    padding: 0 12px;
    border: 1px solid #e8eaec;
    border-radius: 9px;
}

.extras button {
    gap: 3px;
}

.viewport {
    display: grid;
    grid-template-columns: 1fr 17px;
    grid-template-rows: 1fr 16px;
    flex: 1;
    min-height: 0;
}

.page {
    display: flex;
    flex-direction: column;
    min-width: 0;
    overflow: hidden;
}

.page > * {
    flex: none;
}

.links {
    display: flex;
    gap: 34px;
    padding: 33px 0 0 34px;
    font-family: "Liberation Sans", "Noto Sans CJK SC", sans-serif;
    font-size: 19px;
    color: #333;
}

/* The page itself is wider than the window and runs off to the right */
.logo {
    display: grid;
    grid-template-columns: 1fr 89px 1fr;
    gap: 2px;
    width: 1796px;
    height: 96px;
    margin-top: 193px;
    align-items: end;
    color: #f51e00;
    font-family: "Liberation Sans", "Noto Sans CJK SC", sans-serif;
    font-weight: bold;
}

.logo svg {
    width: 89px;
    height: 95px;
}

.logo text {
    fill: #fff;
    stroke: none;
    font-size: 42px;
}

.bai {
    text-align: right;
    font-size: 68px;
    line-height: 56px;
}

.hanzi {
    font-size: 56px;
    line-height: 54px;
}

.main-search {
    width: 938px;
    height: 63px;
    margin: 45px 0 0 429px;
    padding: 0 16px;
    border: 2px solid #4e6edf;
    border-radius: 13px;
}

.foot {
    display: flex;
    align-items: center;
    width: 1798px;
    gap: 21px;
    margin-top: auto;
    padding: 0 0 14px 88px;
    font-family: "Liberation Sans", "Noto Sans CJK SC", sans-serif;
    color: #bbb;
}

.foot .i20 {
    margin-left: 8px;
}

.foot .top {
    margin-left: 12px;
    color: #888;
}

.vbar {
    display: flex;
    flex-direction: column;
    align-items: center;
    grid-row: 1 / 3;
    grid-column: 2;
    gap: 8px;
    padding: 9px 0 26px;
    background: #f0f0f0;
}

.vthumb {
    flex: 1;
    width: 100%;
    margin-bottom: 56px;
    background: #c1c1c1;
}

.hbar {
    display: flex;
    align-items: center;
    justify-content: space-between;
    padding: 0 8px;
    grid-row: 2;
    grid-column: 1;
    background: #f0f0f0;
}

.hthumb {
    width: 56%;
    height: 14px;
    margin: 0 auto 0 6px;
    background: #c1c1c1;
}

/* things that lie over the windows */
.watermark {
    position: absolute;
    right: 36px;
    bottom: 34px;
    display: flex;
    align-items: center;
    font-family: "Liberation Serif", "Noto Sans CJK SC", serif;
    font-size: 78px;
    line-height: 90px;
    font-weight: bold;
    font-style: italic;
    color: #fff;
    -webkit-text-stroke: 8px #111;
    paint-order: stroke fill;
}

.watermark span {
    font-family: "Noto Sans CJK SC", sans-serif;
    font-size: 80px;
    font-weight: 500;
    font-style: normal;
    margin-right: 6px;
}

.meter {
    position: absolute;
    right: 0;
    top: 1009px;
    width: 10px;
    height: 84px;
    border: 4px solid #414b5a;
    border-right: none;
    border-radius: 6px 0 0 6px;
    background: repeating-linear-gradient(transparent 0 2px, #3c4656 2px 4px), linear-gradient(#5a6474 0 50%, #c9c050 50%, #46b8a0 80%);
}

.pointer {
    position: absolute;
    left: 765px;
    top: 469px;
    width: 18px;
    height: 26px;
}
```
